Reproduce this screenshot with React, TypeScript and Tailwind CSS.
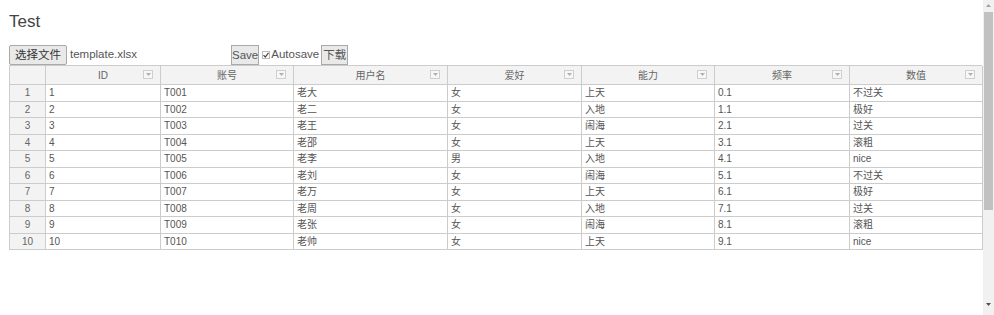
import * as React from "react";

const cols = ["ID", "账号", "用户名", "爱好", "能力", "频率", "数值"] as const;

const rows = [
  ["1", "T001", "老大", "女", "上天", "0.1", "不过关"],
  ["2", "T002", "老二", "女", "入地", "1.1", "极好"],
  ["3", "T003", "老王", "女", "闹海", "2.1", "过关"],
  ["4", "T004", "老邵", "女", "上天", "3.1", "滚粗"],
  ["5", "T005", "老李", "男", "入地", "4.1", "nice"],
  ["6", "T006", "老刘", "女", "闹海", "5.1", "不过关"],
  ["7", "T007", "老万", "女", "上天", "6.1", "极好"],
  ["8", "T008", "老周", "女", "入地", "7.1", "过关"],
  ["9", "T009", "老张", "女", "闹海", "8.1", "滚粗"],
  ["10", "T010", "老帅", "女", "上天", "9.1", "nice"],
];

function FilterIcon() {
  return (
    <span className="flex justify-center items-center bg-[#f7f7f7] border border-[#cfcfcf] w-[10px] h-[9px]">
      <svg width="5" height="3" viewBox="0 0 5 3">
        <path d="M0 0h5L2.5 3z" fill="#b0b0b0" />
      </svg>
    </span>
  );
}

export default function App() {
  return (
    <div className="flex bg-white w-[994px] h-[315px] overflow-hidden font-['Liberation_Sans','Noto_Sans_CJK_SC',sans-serif] text-[#333]">
      <div className="flex-1 pl-[9px]">
        {/* Title */}
        <h1 className="pt-[10px] h-[44px] text-[#444] text-[17px] leading-[24px]">Test</h1>

        {/* Toolbar */}
        <div className="flex items-center h-[21px] text-[11.5px]">
          <div className="flex items-center w-[222px]">
            <button className="bg-[#e9e9e9] px-[5px] border border-[#a9a9a9] rounded-[2px] h-[20px] text-[#333] leading-[18px]">
              选择文件
            </button>
            <span className="ml-[3px] text-[#555]">template.xlsx</span>
          </div>
          <button className="bg-[#e9e9e9] px-0 border border-[#a9a9a9] h-[20px] text-[#555] leading-[18px]">
            Save
          </button>
          <span className="flex justify-center items-center bg-white ml-[3px] border border-[#bbb] w-[8px] h-[8px]">
            <svg width="6" height="6" viewBox="0 0 6 6">
              <path d="M0.5 3.2 2.3 5 5.5 0.8" stroke="#444" strokeWidth="1.2" fill="none" />
            </svg>
          </span>
          <span className="ml-[1px] text-[#555]">Autosave</span>
          <button className="bg-[#e9e9e9] ml-[2px] px-[1px] border border-[#a9a9a9] h-[20px] text-[#555] leading-[18px]">
            下载
          </button>
        </div>

        {/* Table */}
        <div className="grid grid-cols-[36px_115px_133px_154px_134px_133px_135px_133px] border-[#ccc] border-t border-l w-[973px] text-[#555] text-[10px]">
          <div className="bg-[#f3f3f3] border-[#ccc] border-r border-b h-[19px]" />
          {cols.map((c) => (
            <div
              key={c}
              className="relative flex justify-center items-center bg-[#f3f3f3] border-[#ccc] border-r border-b h-[19px] text-[#666]"
            >
              {c}
              <span className="top-[4px] right-[7px] absolute">
                <FilterIcon />
              </span>
            </div>
          ))}
          {rows.map((r) => (
            <React.Fragment key={r[0]}>
              <div className="flex justify-center items-center bg-[#f3f3f3] border-[#ccc] border-r border-b h-[16.5px] text-[#666]">
                {r[0]}
              </div>
              {r.map((v, i) => (
                <div
                  key={i}
                  className="flex items-center bg-white px-[3px] border-[#ccc] border-r border-b h-[16.5px] whitespace-nowrap"
                >
                  {v}
                </div>
              ))}
            </React.Fragment>
          ))}
        </div>
      </div>

      {/* Scrollbar */}
      <div className="flex flex-col items-center bg-[#f1f1f1] w-[11px] h-full">
        <div className="flex justify-center items-center h-[11px]">
          <svg width="5" height="3" viewBox="0 0 5 3">
            <path d="M0 3h5L2.5 0z" fill="#a3a3a3" />
          </svg>
        </div>
        <div className="bg-[#c1c1c1] mt-[1px] w-[9px] h-[198px]" />
        <div className="flex-1" />
        <div className="flex justify-center items-center h-[22px]">
          <svg width="5" height="3" viewBox="0 0 5 3">
            <path d="M0 0h5L2.5 3z" fill="#505050" />
          </svg>
        </div>
      </div>
    </div>
  );
}
